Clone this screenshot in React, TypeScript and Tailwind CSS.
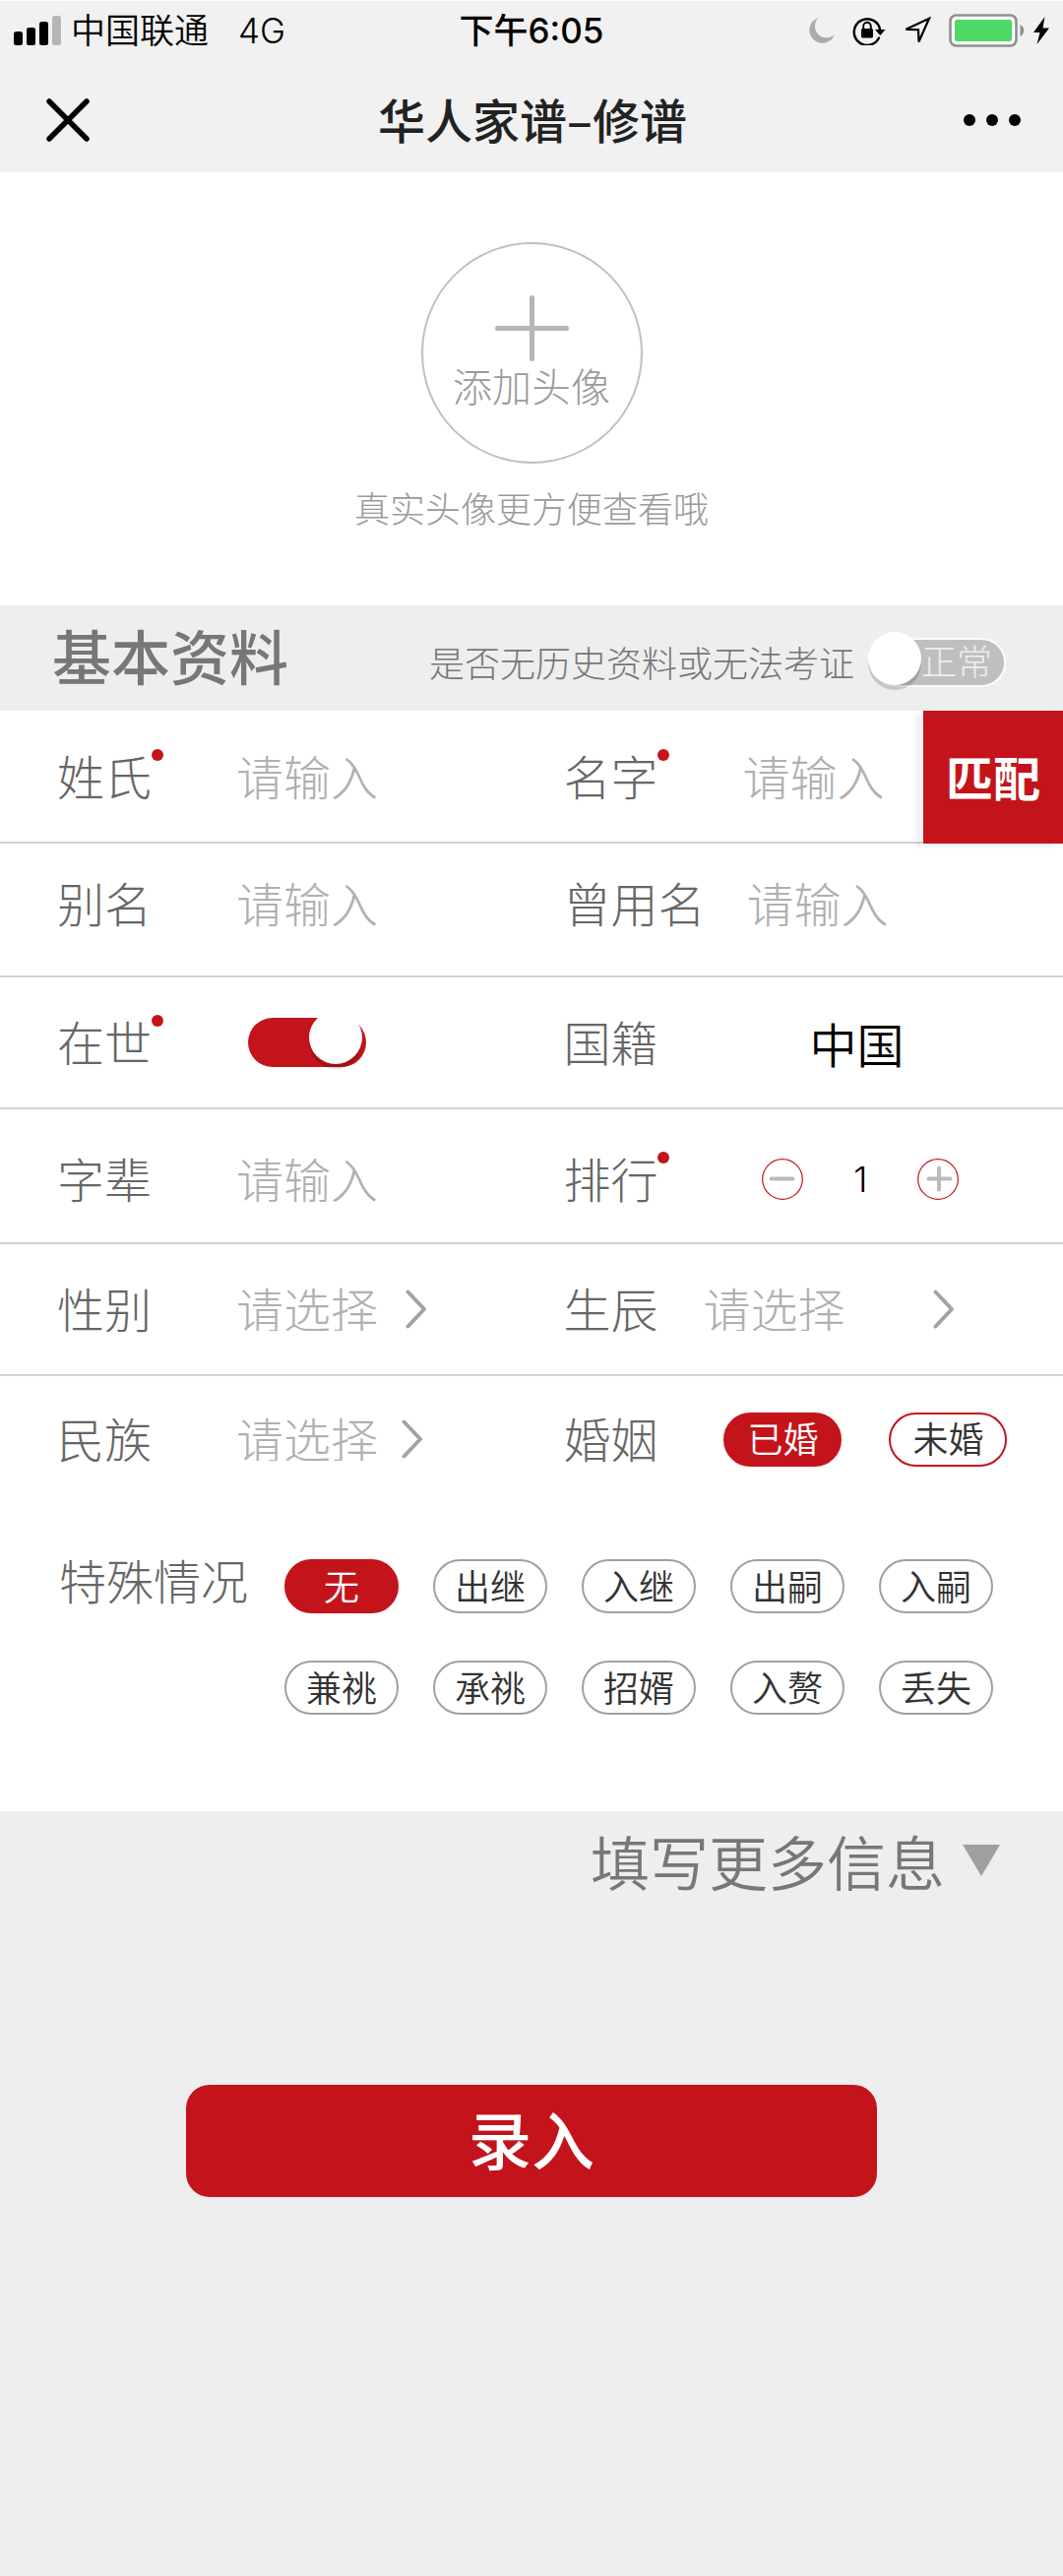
import { useState } from "react";
import type { ReactNode } from "react";

const labelText = "pb-1 text-[48px] leading-[48px] font-light text-[#666]";
const fieldText =
  "pb-1 text-[48px] leading-[48px] font-light text-[#b0b0b0] placeholder:text-[#b0b0b0] placeholder:opacity-100 bg-transparent outline-none";

function Label({ htmlFor, required, className = "w-[182px]", children }: { htmlFor?: string; required?: boolean; className?: string; children: ReactNode }) {
  return (
    <div className={`shrink-0 ${className}`}>
      <label htmlFor={htmlFor} className={`relative block w-max ${labelText}`}>
        {children}
        {required && <span className="absolute -top-0.5 left-full size-3 rounded-full bg-[#c4141b]" />}
      </label>
    </div>
  );
}

function TextField({ id }: { id: string }) {
  return <input id={id} type="text" placeholder="请输入" className={`w-[150px] ${fieldText}`} />;
}

function SelectField({ id, options, gap = "gap-[26px]" }: { id: string; options: string[]; gap?: string }) {
  return (
    <div className={`flex items-center ${gap}`}>
      <select id={id} defaultValue="" className={`w-[146px] appearance-none ${fieldText}`}>
        <option value="">请选择</option>
        {options.map((o) => (
          <option key={o}>{o}</option>
        ))}
      </select>
      <svg viewBox="0 0 22 40" className="h-10 w-[22px]" fill="none" stroke="#a3a3a3" strokeWidth="4" strokeLinecap="round" strokeLinejoin="round">
        <path d="M2.5 2.5 19 20 2.5 37.5" />
      </svg>
    </div>
  );
}

function Pill({ name, label, checked, onSelect, outline, width }: { name: string; label: string; checked: boolean; onSelect: () => void; outline: string; width: string }) {
  return (
    <label
      className={`flex h-[55px] cursor-pointer items-center justify-center rounded-full border-2 pb-1 text-[36px] leading-[36px] font-[350] ${width} ${
        checked ? "border-[#c4141b] bg-[#c4141b] text-white" : `bg-white text-[#333] ${outline}`
      }`}
    >
      <input type="radio" name={name} value={label} checked={checked} onChange={onSelect} className="sr-only" />
      {label}
    </label>
  );
}

function Row({ height, left, right, action }: { height: string; left: ReactNode; right: ReactNode; action?: ReactNode }) {
  return (
    <div className={`relative grid grid-cols-[53fr_47fr] border-b-2 border-[#d2d2d2] ${height}`}>
      <div className="flex items-center pl-[58px]">{left}</div>
      <div className="flex items-center">
        {right}
        {action}
      </div>
    </div>
  );
}

function StatusBar() {
  return (
    <div className="grid h-[68px] grid-cols-[1fr_auto_1fr] items-center px-3.5 pb-2 font-['Inter','Noto_Sans_CJK_SC',sans-serif] text-black">
      <div className="flex items-center text-[35px] leading-[36px] font-[350]">
        <svg viewBox="0 0 48 30" className="mr-2.5 h-[30px] w-12">
          <rect x="0" y="16" width="9" height="14" rx="2.5" />
          <rect x="13" y="12" width="9" height="18" rx="2.5" />
          <rect x="26" y="6" width="9" height="24" rx="2.5" />
          <rect x="39" y="0" width="9" height="30" rx="2.5" fill="#b5b5b5" />
        </svg>
        <span>中国联通</span>
        <span className="ml-[30px]">4G</span>
      </div>
      <div className="text-[35px] leading-[36px] font-medium">下午6:05</div>
      <div className="flex items-center justify-end">
        <svg viewBox="0 0 26 28" className="h-7 w-[26px]" fill="#ababab">
          <path d="M9.5 1A13.2 13.2 0 1 0 26 18 11.5 11.5 0 0 1 9.5 1Z" />
        </svg>
        <svg viewBox="0 0 34 30" className="ml-[18px] h-[30px] w-[34px]" fill="none" stroke="#000" strokeWidth="2.4">
          <path d="M27 22.5A13.3 13.3 0 1 1 28.3 15" strokeLinecap="round" />
          <path d="M23 14h10.500l-5.200 6Z" fill="#000" stroke="none" />
          <rect x="9" y="13" width="12" height="9.500" rx="1.500" fill="#000" stroke="none" />
          <path d="M11.200 14v-3.400a3.800 3.800 0 0 1 7.600 0V14" strokeWidth="1.900" />
        </svg>
        <svg viewBox="0 0 28 28" className="ml-[18px] size-7" fill="none" stroke="#000" strokeWidth="2.200" strokeLinejoin="miter">
          <path d="M2.500 12.800 26 1.800 15.500 25.500 15 13.200Z" />
        </svg>
        <svg viewBox="0 0 78 34" className="ml-[18px] h-[34px] w-[78px]">
          <rect x="1.500" y="1.500" width="67" height="31" rx="6" fill="#fff" stroke="#8f8f8f" strokeWidth="2.600" />
          <rect x="6" y="6" width="58" height="22" rx="2.500" fill="#4cd964" />
          <path d="M72.500 11c5 2 5 10 0 12Z" fill="#8f8f8f" />
        </svg>
        <svg viewBox="0 0 16 28" className="ml-2 h-7 w-4">
          <path d="M11.500 0 0 16h6.500L3.500 28 16 11.500H9.500Z" />
        </svg>
      </div>
    </div>
  );
}

function Switch({ id, checked, onChange, className }: { id: string; checked: boolean; onChange: (v: boolean) => void; className: string }) {
  return (
    <input
      id={id}
      type="checkbox"
      role="switch"
      checked={checked}
      onChange={(e) => onChange(e.target.checked)}
      className={`relative shrink-0 cursor-pointer appearance-none rounded-full before:absolute before:size-[54px] before:rounded-full before:bg-white before:shadow-[0_5px_0_rgba(0,0,0,0.16)] ${className}`}
    />
  );
}

const situations = ["无", "出继", "入继", "出嗣", "入嗣", "兼祧", "承祧", "招婿", "入赘", "丢失"];

export default function App() {
  const [unverified, setUnverified] = useState(false);
  const [alive, setAlive] = useState(true);
  const [rank, setRank] = useState(1);
  const [marriage, setMarriage] = useState("已婚");
  const [situation, setSituation] = useState("无");

  return (
    <div className="min-h-screen bg-[#eee] font-['Noto_Sans_CJK_SC',sans-serif]" lang="zh-CN">
      <header className="border-t border-white bg-[#f1f1f1]">
        <StatusBar />
        <div className="flex h-[106px] items-center justify-between pr-[43px] pl-[47px]">
          <button type="button" aria-label="关闭" className="w-14">
            <svg viewBox="0 0 44 44" className="size-11" stroke="#000" strokeWidth="5.500" strokeLinecap="round">
              <path d="M3 3 41 41M41 3 3 41" />
            </svg>
          </button>
          <h1 className="pb-1 text-[48px] leading-[48px] font-medium text-[#222]">华人家谱–修谱</h1>
          <button type="button" aria-label="更多" className="flex w-[58px] justify-between">
            <span className="size-3 rounded-full bg-black" />
            <span className="size-3 rounded-full bg-black" />
            <span className="size-3 rounded-full bg-black" />
          </button>
        </div>
      </header>

      <main>
        <section className="flex flex-col items-center bg-white pt-[71px] pb-[82px]">
          <button type="button" className="flex size-[225px] flex-col items-center rounded-full border-2 border-[#c0c0c0] pt-[52px]">
            <svg viewBox="0 0 75 67" className="h-[67px] w-[75px]" stroke="#b5b5b5" strokeWidth="5" strokeLinecap="round">
              <path d="M2.500 33.500h70M37.500 2.500v62" />
            </svg>
            <span className="mt-1 text-[40px] leading-[40px] font-light text-[#9a9a9a]">添加头像</span>
          </button>
          <p className="mt-[26px] text-[36px] leading-[36px] font-light text-[#9a9a9a]">真实头像更方便查看哦</p>
        </section>

        <section className="flex h-[107px] items-center justify-between pr-[58px] pl-[53px]">
          <h2 className="pb-2 text-[60px] leading-[60px] font-medium text-[#777]">基本资料</h2>
          <div className="flex items-center pt-2">
            <label htmlFor="unverified" className="mr-[18px] pb-0.5 text-[36px] leading-[36px] font-light text-[#777]">
              是否无历史资料或无法考证
            </label>
            <div className="relative flex">
              <Switch
                id="unverified"
                checked={unverified}
                onChange={setUnverified}
                className="h-[50px] w-[136px] border-2 border-[#fafafa] bg-[#bfbfbf] before:-top-2 before:-left-1.5 checked:bg-[#c4141b] checked:before:left-[82px]"
              />
              {!unverified && (
                <span className="pointer-events-none absolute inset-y-0 right-3.5 flex items-center pb-1.5 text-[36px] leading-[36px] font-light text-[#eee]">正常</span>
              )}
            </div>
          </div>
        </section>

        <form className="bg-white" onSubmit={(e) => e.preventDefault()}>
          <Row
            height="h-[135px]"
            left={
              <>
                <Label htmlFor="surname" required>姓氏</Label>
                <TextField id="surname" />
              </>
            }
            right={
              <>
                <Label htmlFor="given" required>名字</Label>
                <TextField id="given" />
              </>
            }
            action={
              <button type="button" className="-mb-0.5 ml-auto w-[142px] self-stretch bg-[#c4141b] pb-1 text-[48px] leading-[48px] font-bold text-white shadow-[-8px_4px_3px_rgba(0,0,0,0.05)]">
                匹配
              </button>
            }
          />
          <Row
            height="h-[136px] pb-3"
            left={
              <>
                <Label htmlFor="alias">别名</Label>
                <TextField id="alias" />
              </>
            }
            right={
              <>
                <Label htmlFor="former" className="w-[186px]">曾用名</Label>
                <TextField id="former" />
              </>
            }
          />
          <Row
            height="h-[134px]"
            left={
              <>
                <Label htmlFor="alive" required className="w-[194px]">在世</Label>
                <Switch
                  id="alive"
                  checked={alive}
                  onChange={setAlive}
                  className="h-[50px] w-[120px] bg-[#bfbfbf] before:-top-[7px] before:left-1 checked:bg-[#c4141b] checked:before:left-[62px]"
                />
              </>
            }
            right={
              <>
                <Label htmlFor="country" className="w-[250px]">国籍</Label>
                <input id="country" type="text" defaultValue="中国" className="w-[150px] bg-transparent text-[48px] leading-[48px] font-[350] text-black outline-none" />
              </>
            }
          />
          <Row
            height="h-[137px] pt-1.5"
            left={
              <>
                <Label htmlFor="generation">字辈</Label>
                <TextField id="generation" />
              </>
            }
            right={
              <>
                <Label htmlFor="rank" required className="w-[202px]">排行</Label>
                <button type="button" aria-label="减少" onClick={() => setRank(Math.max(1, rank - 1))}>
                  <svg viewBox="0 0 42 42" className="size-[42px]" fill="none">
                    <circle cx="21" cy="21" r="20.300" stroke="#c4141b" strokeWidth="1.200" />
                    <path d="M9.500 20.500h22" stroke="#bbb" strokeWidth="4" strokeLinecap="round" />
                  </svg>
                </button>
                <output id="rank" className="w-[116px] text-center font-['Inter',sans-serif] text-[36px] leading-[36px] font-light text-black">
                  {rank}
                </output>
                <button type="button" aria-label="增加" onClick={() => setRank(rank + 1)}>
                  <svg viewBox="0 0 42 42" className="size-[42px]" fill="none">
                    <circle cx="21" cy="21" r="20.300" stroke="#c4141b" strokeWidth="1.200" />
                    <path d="M11.500 20.500h22M22 9.500v22" stroke="#bbb" strokeWidth="4" strokeLinecap="round" />
                  </svg>
                </button>
              </>
            }
          />
          <Row
            height="h-[134px]"
            left={
              <>
                <Label htmlFor="gender">性别</Label>
                <SelectField id="gender" options={["男", "女"]} />
              </>
            }
            right={
              <>
                <Label htmlFor="birth" className="w-[142px]">生辰</Label>
                <SelectField id="birth" options={["子时", "丑时", "寅时"]} gap="gap-[88px]" />
              </>
            }
          />

          <div className="grid h-[128px] grid-cols-[53fr_47fr]">
            <div className="flex items-center pl-[58px]">
              <Label htmlFor="ethnic">民族</Label>
              <SelectField id="ethnic" options={["汉族", "满族", "回族"]} gap="gap-[22px]" />
            </div>
            <div className="flex items-center">
              <Label className="w-[163px]">婚姻</Label>
              <div className="flex gap-12" role="radiogroup" aria-label="婚姻">
                {["已婚", "未婚"].map((m) => (
                  <Pill key={m} name="marriage" label={m} checked={marriage === m} onSelect={() => setMarriage(m)} outline="border-[#c4141b]" width="w-[120px]" />
                ))}
              </div>
            </div>
          </div>

          <div className="flex items-start pt-[58px] pr-[71px] pb-[98px] pl-[60px]">
            <span className={`-mt-1 w-[229px] shrink-0 ${labelText}`}>特殊情况</span>
            <div className="grid flex-1 grid-cols-5 gap-x-[35px] gap-y-12" role="radiogroup" aria-label="特殊情况">
              {situations.map((s) => (
                <Pill key={s} name="situation" label={s} checked={situation === s} onSelect={() => setSituation(s)} outline="border-[#a0a0a0]" width="w-full" />
              ))}
            </div>
          </div>
        </form>

        <button type="button" className="mt-5 mr-[64px] ml-auto flex items-center gap-[18px] text-[60px] leading-[60px] font-[350] text-[#777]">
          填写更多信息
          <svg viewBox="0 0 38 32" className="h-8 w-[38px]" fill="#9f9f9f">
            <path d="M0 0h38L19 32Z" />
          </svg>
        </button>

        <button type="submit" className="mx-auto mt-[198px] flex h-[114px] w-[65%] items-center justify-center rounded-3xl bg-[#c4141b] pb-2 text-[64px] leading-[64px] font-medium text-white">
          录入
        </button>
      </main>
    </div>
  );
}
